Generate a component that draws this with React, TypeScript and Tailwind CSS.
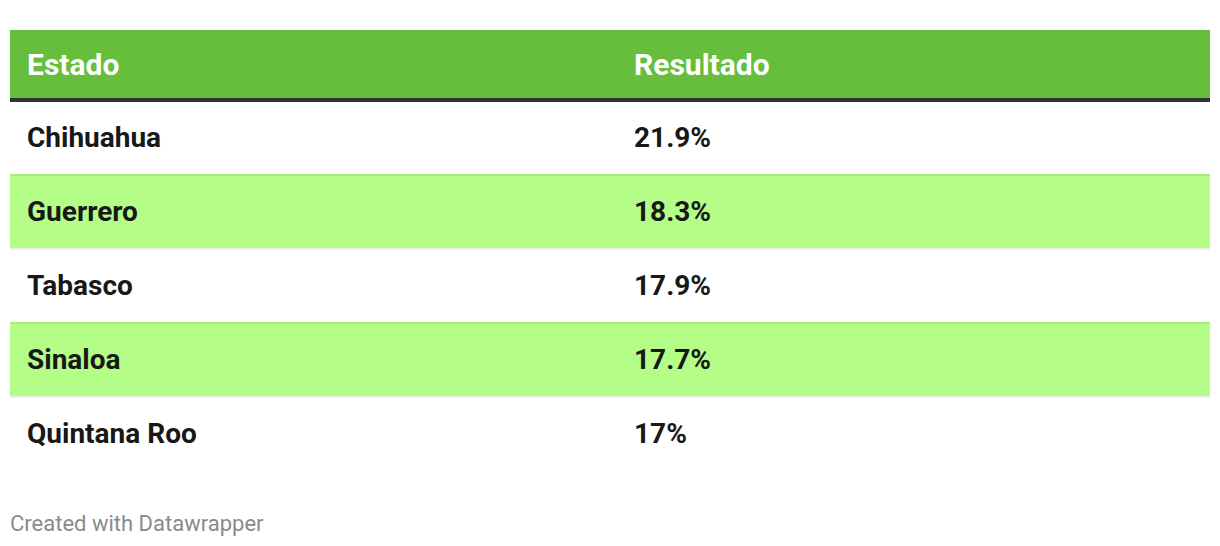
import React from "react";

const rows = [
  ["Chihuahua", "21.9%"],
  ["Guerrero", "18.3%"],
  ["Tabasco", "17.9%"],
  ["Sinaloa", "17.7%"],
  ["Quintana Roo", "17%"],
];

export default function App() {
  return (
    <div className="w-[1220px] h-[546px] bg-white pt-[30px] px-[10px]" style={{ fontFamily: "Roboto, 'Liberation Sans', sans-serif" }}>
      <div className="w-[1200px]">
        <div className="flex h-[72px] bg-[#67be3c] border-b-4 border-[#333333] text-white font-bold text-[30px] items-center">
          <div className="w-[607px] pl-[17px]">Estado</div>
          <div className="flex-1 pl-[17px]">Resultado</div>
        </div>
        {rows.map(([a, b], i) => {
          const striped = i % 2 === 1;
          return (
            <div
              key={a}
              className={
                striped
                  ? "flex h-[76px] items-center bg-[#b4fe88] border-t-2 border-t-[#a7ee7c] border-b-2 border-b-[#eeeeee] text-[#181818] font-bold text-[28px]"
                  : "flex h-[72px] items-center bg-white text-[#181818] font-bold text-[28px]"
              }
            >
              <div className="w-[607px] pl-[17px]">{a}</div>
              <div className="flex-1 pl-[17px]">{b}</div>
            </div>
          );
        })}
        <div className="mt-[37px] text-[22px] text-[#8a8a8a]">Created with Datawrapper</div>
      </div>
    </div>
  );
}
